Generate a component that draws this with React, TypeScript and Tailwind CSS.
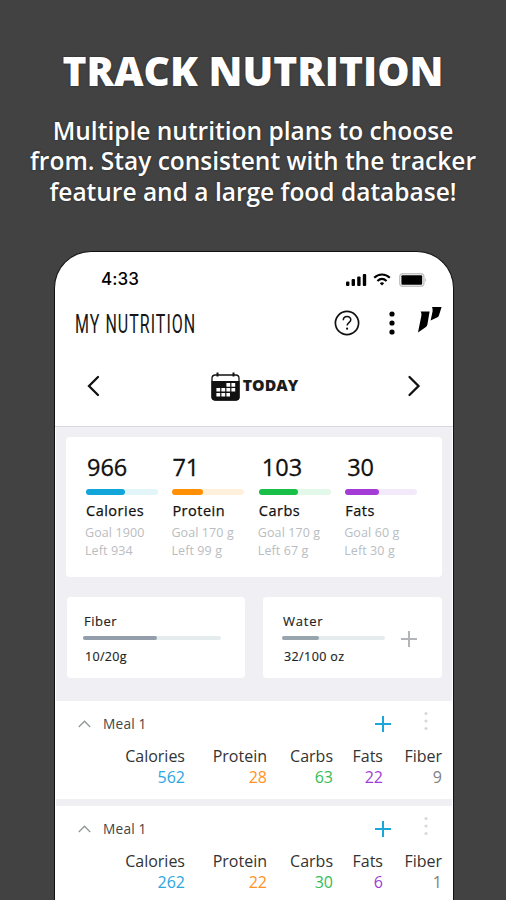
import clsx from "clsx";

const macros = [
  { label: "Calories", value: "966", goal: "Goal 1900", left: "Left 934", bar: "bg-[#12a5da]", track: "bg-[#e2f5f8]", fill: 39, pad: "pl-px" },
  { label: "Protein", value: "71", goal: "Goal 170 g", left: "Left 99 g", bar: "bg-[#ff9006]", track: "bg-[#fff0dc]", fill: 31, pad: "pl-0" },
  { label: "Carbs", value: "103", goal: "Goal 170 g", left: "Left 67 g", bar: "bg-[#19bf46]", track: "bg-[#e2f8e8]", fill: 39, pad: "pl-[3px]" },
  { label: "Fats", value: "30", goal: "Goal 60 g", left: "Left 30 g", bar: "bg-[#a53bd6]", track: "bg-[#f2eafb]", fill: 34, pad: "pl-0.5" },
];

const meals = [
  { name: "Meal 1", values: ["562", "28", "63", "22", "9"] },
  { name: "Meal 1", values: ["262", "22", "30", "6", "1"] },
];

const columns = [
  { label: "Calories", width: "w-[129px]", color: "text-[#2ba6de]" },
  { label: "Protein", width: "w-[82px]", color: "text-[#ff9225]" },
  { label: "Carbs", width: "w-[66px]", color: "text-[#35bd55]" },
  { label: "Fats", width: "w-[50px]", color: "text-[#a03cd8]" },
  { label: "Fiber", width: "w-[59px]", color: "text-[#808080]" },
];

const Plus = ({ className }: { className?: string }) => (
  <svg width="16" height="16" viewBox="0 0 16 16" className={className} fill="none" stroke="currentColor" strokeWidth="2">
    <path d="M8 0v16M0 8h16" />
  </svg>
);

const StatusBar = () => (
  <div className="flex h-[55px] items-center pl-[46px] pr-[26px]">
    <span className="pt-px font-['Inter'] text-[17px] font-medium tracking-[0.1px] text-black">4:33</span>
    <div className="ml-auto flex items-center">
      <svg width="21" height="14" viewBox="0 0 21 14" className="mr-[6px]">
        <rect x="0" y="8.5" width="3.4" height="4.5" rx="1" />
        <rect x="5.6" y="6" width="3.4" height="7" rx="1" />
        <rect x="11.2" y="3.5" width="3.4" height="9.5" rx="1" />
        <rect x="16.8" y="1" width="3.4" height="12" rx="1" />
      </svg>
      <svg width="18" height="13" viewBox="0 0 18 13" className="mr-[8px]" fill="none" stroke="#000" strokeWidth="2.1">
        <path d="M1.2 4.8C5.6 .3 12.4 .3 16.8 4.8" />
        <path d="M4.4 8C7.2 5.4 10.8 5.4 13.6 8" />
        <path d="M6.8 10.2Q9 8.5 11.2 10.2L9 12.6Z" fill="#000" stroke="none" />
      </svg>
      <svg width="28" height="14" viewBox="0 0 28 14">
        <rect x=".7" y=".7" width="24.2" height="12.6" rx="3" fill="#fff" stroke="#c4c4c4" strokeWidth="1.4" />
        <rect x="2.4" y="2.2" width="20.8" height="9.6" rx="1" />
        <path d="M26 4.6q1.8 2.4 0 4.8z" fill="#b9b9b9" />
      </svg>
    </div>
  </div>
);

const Header = () => (
  <div className="flex h-[34px] items-center pl-5 pr-[11px]">
    <div className="w-[121px]">
      <h2 className="w-max origin-left scale-x-[0.64] font-['Roboto'] text-[25px] leading-[34px] tracking-[1.6px] text-[#161616]">
        MY NUTRITION
      </h2>
    </div>
    <svg width="26" height="26" viewBox="0 0 26 26" fill="none" stroke="#111" className="-mt-1 ml-auto mr-[29px]">
      <circle cx="13" cy="13" r="11.6" strokeWidth="1.7" />
      <path d="M9.3 10.2c0-4.8 7.5-4.7 7.5-.4 0 2.9-3.7 2.8-3.7 5.8" strokeWidth="1.5" />
      <circle cx="13.1" cy="18.7" r="1.1" fill="#111" stroke="none" />
    </svg>
    <svg width="6" height="24" viewBox="0 0 6 24" className="-mt-1 mr-[23px]">
      <circle cx="3" cy="3" r="2.6" />
      <circle cx="3" cy="12" r="2.6" />
      <circle cx="3" cy="21" r="2.6" />
    </svg>
    <svg width="24" height="26" viewBox="0 0 24 26" className="-mt-[10px]">
      <path d="M2.6 4.4H11.6L9.4 17.6Q9 19.6 7.2 20.6L0 25.4L3.4 8.6Q3.8 6 2.6 4.4Z" />
      <path d="M14 0H23.6L21 8.2Q20.6 9.8 19 10.6L12.6 13.6L14.6 4.2Q14.8 1.6 14 0Z" />
    </svg>
  </div>
);

const DayPicker = () => (
  <div className="flex h-[86px] items-center justify-between border-b border-[#d9d8de] pl-[31px] pr-[32px] pt-[5px]">
    <svg width="14" height="22" viewBox="0 0 14 22" fill="none" stroke="#111" strokeWidth="2.3" strokeLinecap="round">
      <path d="M12 2L3 11L12 20" />
    </svg>
    <div className="flex items-center pl-0.5">
      <svg width="29" height="29" viewBox="0 0 29 29" className="mr-[3px]">
        <rect x="1" y="3" width="27" height="25" rx="3.2" fill="#fff" stroke="#111" strokeWidth="1.3" />
        <path d="M.5 9H28.5V25a3 3 0 0 1-3 3.5H3.5A3 3 0 0 1 .5 25Z" fill="#111" />
        <path d="M6.5 .5V4.5M22.5 .5V4.5" stroke="#111" strokeWidth="2" />
        <path d="M15.4 12.9H24.5M5.4 17.8H24.5M5.4 22.7H19" stroke="#fff" strokeWidth="3.6" strokeDasharray="3.8 1.2" />
      </svg>
      <span className="-mt-px text-[15.8px] font-extrabold leading-none text-[#1c1c1c]">TODAY</span>
    </div>
    <svg width="14" height="22" viewBox="0 0 14 22" fill="none" stroke="#111" strokeWidth="2.3" strokeLinecap="round">
      <path d="M2.5 2L11.5 11L2.5 20" />
    </svg>
  </div>
);

const MacroCard = () => (
  <div className="flex h-[140px] rounded-[4px] bg-white pl-5 pt-[18px]">
    {macros.map((m) => (
      <div key={m.label} className="w-[86.4px] shrink-0">
        <div className={clsx("h-[25px] text-[23.5px] leading-[25px] text-[#111] [-webkit-text-stroke:0.3px_#111]", m.pad)}>{m.value}</div>
        <div className={clsx("mt-[9px] h-[6px] w-[72px] rounded-full", m.track)}>
          <div className={clsx("h-full rounded-full", m.bar)} style={{ width: m.fill }} />
        </div>
        <div className="mt-[7px] text-[14.5px] leading-[18px] tracking-[0.5px] text-[#111] [-webkit-text-stroke:0.25px_#111]">
          {m.label}
        </div>
        <div className="-ml-px mt-[4px] text-[12.5px] leading-[18px] tracking-[0.1px] text-[#b9bdc1]">
          <div>{m.goal}</div>
          <div>{m.left}</div>
        </div>
      </div>
    ))}
  </div>
);

const MealRow = ({ meal }: { meal: (typeof meals)[number] }) => (
  <div className="h-[98px] bg-white">
    <div className="flex h-[46px] items-center pl-[22px] pr-[24px]">
      <svg width="13" height="8" viewBox="0 0 13 8" fill="none" stroke="#929797" strokeWidth="1.3">
        <path d="M.8 7L6.5 1.2L12.2 7" />
      </svg>
      <span className="ml-3 text-[13.7px] tracking-[0.2px] text-[#444]">{meal.name}</span>
      <Plus className="-mt-px ml-auto text-[#1ba6d8]" />
      <svg width="4" height="20" viewBox="0 0 4 20" fill="#d3dada" className="-mt-[7px] ml-[33px]">
        <circle cx="2" cy="2.5" r="1.6" />
        <circle cx="2" cy="10" r="1.6" />
        <circle cx="2" cy="17.5" r="1.6" />
      </svg>
    </div>
    <div className="flex text-right text-[16px] leading-[22px]">
      {columns.map((c, i) => (
        <div key={c.label} className={c.width}>
          <div className="-mt-[2px] text-[#333]">{c.label}</div>
          <div className={clsx("-mt-px", c.color)}>{meal.values[i]}</div>
        </div>
      ))}
    </div>
  </div>
);

const App = () => {
  return (
    <div className="flex h-[900px] w-[506px] flex-col overflow-hidden bg-[#424242] font-['Open_Sans',sans-serif]">
      {/* HEADLINE */}
      <div className="h-[251px] shrink-0 text-center text-white">
        <h1 className="whitespace-nowrap pt-[45px] text-[40.7px] font-extrabold leading-[50px] [text-shadow:0_0_2px_#222]">
          TRACK NUTRITION
        </h1>
        <p className="mt-[21px] whitespace-nowrap text-[24.5px] font-semibold leading-[30.3px] [text-shadow:0_0_2px_#222]">
          Multiple nutrition plans to choose
          <br />
          from. Stay consistent with the tracker
          <br />
          feature and a large food database!
        </p>
      </div>

      {/* PHONE */}
      <div className="ml-[54px] h-[649px] w-[400px] shrink-0 overflow-hidden rounded-t-[37px] border border-b-0 border-[#111] bg-white">
        <StatusBar />
        <div className="h-[34px] pt-px">
          <Header />
        </div>
        <DayPicker />

        {/* CONTENT */}
        <div className="mx-px bg-[#f0eff4]">
          <div className="h-[274px] px-[10px] pt-[10px]">
            <MacroCard />
            <div className="mt-[20px] flex justify-between pl-px">
              <div className="h-[81px] w-[178px] rounded-[4px] bg-white pl-4 pt-[15px]">
                <div className="pl-px text-[13px] leading-[18px] tracking-[0.5px] text-[#222] [-webkit-text-stroke:0.15px_#222]">Fiber</div>
                <div className="mt-[6px] h-1 w-[138px] rounded-full bg-[#e4ecee]">
                  <div className="h-full w-[74px] rounded-full bg-[#939eaa]" />
                </div>
                <div className="mt-[8px] pl-0.5 text-[12.5px] leading-[18px] tracking-[0.3px] text-[#222] [-webkit-text-stroke:0.15px_#222]">10/20g</div>
              </div>
              <div className="flex h-[81px] w-[179px] items-center justify-between rounded-[4px] bg-white pl-[19px] pr-[25px]">
                <div className="h-full pt-[15px]">
                  <div className="pl-px text-[13px] leading-[18px] tracking-[0.8px] text-[#222] [-webkit-text-stroke:0.15px_#222]">Water</div>
                  <div className="mt-[6px] h-1 w-[103px] rounded-full bg-[#e4ecee]">
                    <div className="h-full w-[37px] rounded-full bg-[#98a5ad]" />
                  </div>
                  <div className="mt-[8px] pl-0.5 text-[12.5px] leading-[18px] tracking-[0.4px] text-[#222] [-webkit-text-stroke:0.15px_#222]">32/100 oz</div>
                </div>
                <Plus className="mt-0.5 text-[#b3b5b8]" />
              </div>
            </div>
          </div>
          <div className="flex flex-col gap-[7px]">
            {meals.map((meal, i) => (
              <MealRow key={i} meal={meal} />
            ))}
          </div>
        </div>
      </div>
    </div>
  );
};

export default App;
